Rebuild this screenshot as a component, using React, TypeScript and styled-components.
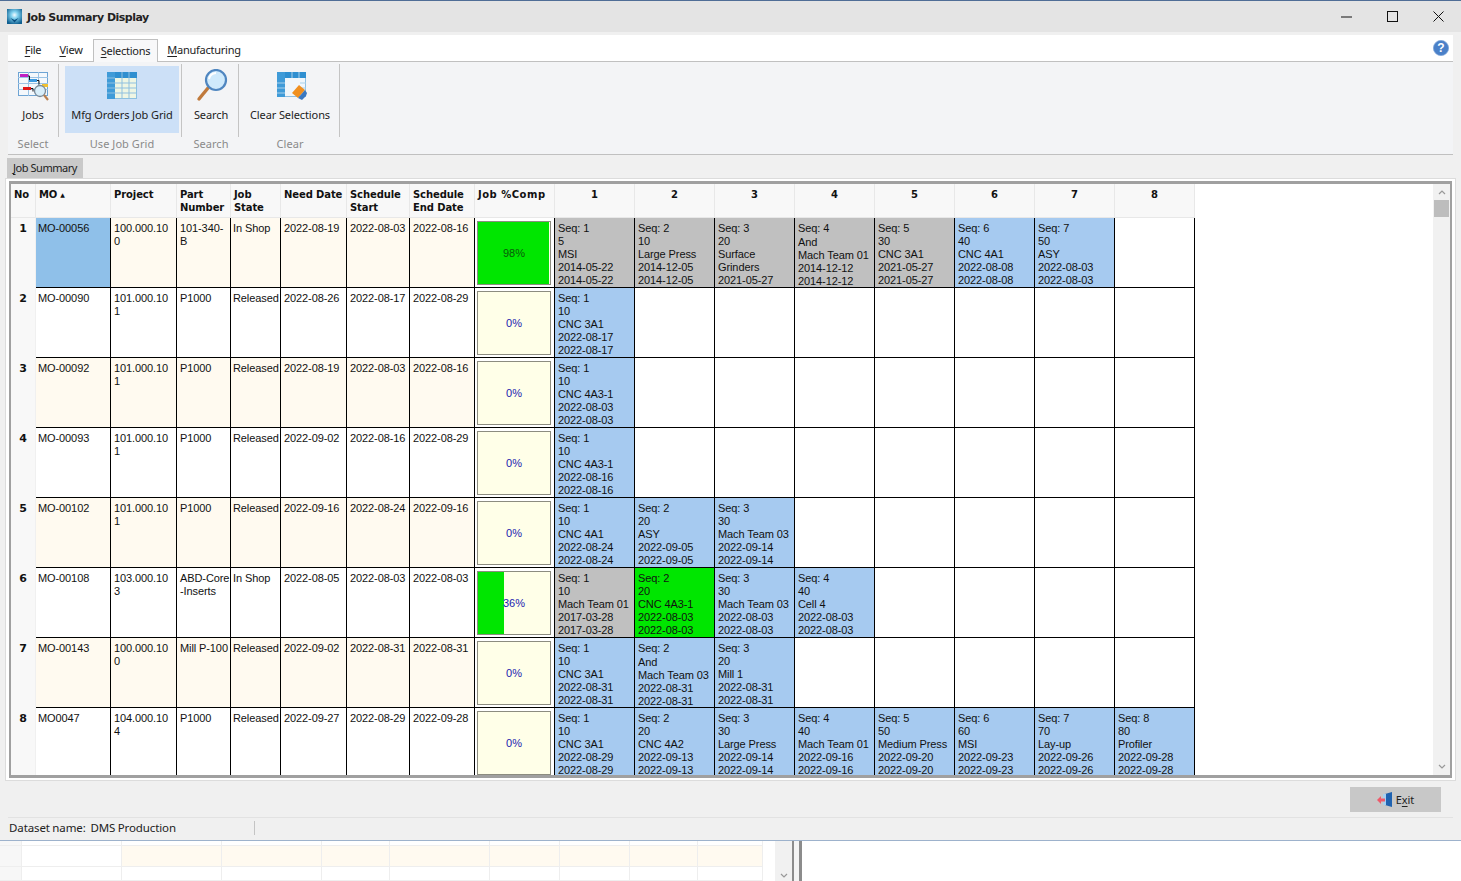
import React from "react";
import styled, { createGlobalStyle } from "styled-components";

const Global = createGlobalStyle`
  html, body { margin: 0; padding: 0; background: #fff; overflow: hidden; }
  #root { width: 1461px; height: 881px; overflow: hidden; }
`;

const Page = styled.div`
  width: 1461px; height: 881px; display: flex; flex-direction: column;
  font-family: "Liberation Sans", Arial, sans-serif; color: #111;
`;
const Win = styled.div`
  flex: none; background: #f0f0f0; display: flex; flex-direction: column;
  border-top: 1px solid #4f6d96; border-bottom: 1px solid #9db2cc; height: 839px;
`;
const TitleBar = styled.div`
  height: 31px; flex: none; background: #e4e4e4; display: flex; align-items: center; padding-left: 7px;
`;
const TitleText = styled.span`
  font: bold 11px "DejaVu Sans", sans-serif; letter-spacing: -0.5px; margin: 2px 0 0 5px; color: #222;
`;
const WinButtons = styled.div`
  margin-left: auto; display: flex; align-items: center; gap: 35px; padding-right: 17px; color: #111;
`;
const MenuBar = styled.div`
  margin: 3px 8px 0; height: 26px; flex: none; background: #fff; border-bottom: 1px solid #c0c0c0;
  display: flex; align-items: flex-end; padding-left: 1px; position: relative;
`;
const MenuItem = styled.div<{ $active?: boolean; $w: number; $mr?: number }>`
  width: ${p => p.$w}px; height: 22px; box-sizing: border-box; text-align: center; margin-right: ${p => p.$mr || 0}px;
  font: 11px/21px "Noto Sans", sans-serif; letter-spacing: -0.25px; color: #222;
  ${p => p.$active ? "border: 1px solid #c0c0c0; border-bottom: 0; background:#f8f8f9; margin-bottom:-1px; height:23px;" : ""}
  u { text-decoration-thickness: 1px; text-underline-offset: 2px; }
`;
const HelpBtn = styled.div`
  position: absolute; right: 4px; top: 5px; width: 16px; height: 16px;
`;
const Ribbon = styled.div`
  margin: 0 8px; flex: none; background: #f3f4f6; border-bottom: 1px solid #c0c0c0;
  display: flex; padding-top: 2px; box-sizing: border-box; height: 93px;
`;
const RibbonGroup = styled.div<{ $w: number; $pl: number }>`
  width: ${p => p.$w}px; height: 71px; padding: 2px 2px 0 ${p => p.$pl}px; border-right: 1px solid #c4c4c4; flex: none;
  display: flex; flex-direction: column;
`;
const RibbonBtn = styled.div<{ $on?: boolean }>`
  height: 67px; flex: none; display: flex; flex-direction: column; align-items: center;
  background: ${p => (p.$on ? "#cce0f7" : "transparent")}; font: 11px/15px "Noto Sans", sans-serif; letter-spacing: -0.1px; color: #222;
  svg { margin-top: 3px; height: 36px; flex: none; }
  span { margin-top: 2px; white-space: nowrap; }
`;
const GroupLabel = styled.div`
  margin-top: 3px; text-align: center; font: 11px/15px "Noto Sans", sans-serif; color: #8a8a8a; letter-spacing: 0.05px; white-space: nowrap;
`;
const TabRow = styled.div`
  height: 24px; flex: none; padding: 3px 7px 0; box-sizing: border-box; display: flex;
`;
const Tab = styled.div`
  width: 76px; height: 20px; background: #c9c9c9; font: 11px/20px "Noto Sans", sans-serif; letter-spacing: -0.45px; text-align: center; color: #222;
  u { text-underline-offset: 2px; }
`;
const GridOuter = styled.div`
  margin: -1px 5px 0; height: 603px; flex: none; box-sizing: border-box; border: 1px solid #dcdcdc;
  padding: 2px 3px; background: #fff;
`;
const GridFrame = styled.div`
  height: 100%; box-sizing: border-box; border-style: solid; border-color: #a0a0a0; border-width: 3px 2px; background: #fff;
  display: flex; position: relative; overflow: hidden;
`;
const Table = styled.div`
  display: grid; flex: none; align-content: start;
  grid-template-columns: 25px 75px 66px 54px 50px 66px 63px 65px 80px repeat(8, 80px);
  grid-template-rows: 34px repeat(8, 70px);
  height: 100%; overflow: hidden;
`;
const Head = styled.div<{ $center?: boolean; $wide?: boolean }>`
  background: #f8f8f8; border-right: 1px solid #e8e8e8; border-bottom: 1px solid #e8e8e8;
  font: bold 10px/13px "DejaVu Sans", sans-serif; letter-spacing: ${p => (p.$wide ? 0.5 : -0.1)}px; color: #111; box-sizing: border-box; white-space: pre-line;
  padding: 4px 0 0 ${p => (p.$center ? 0 : 3)}px;
  text-align: ${p => (p.$center ? "center" : "left")};
`;
const SortMark = styled.span`
  font-size: 6px; vertical-align: 1px; margin-left: 1px;
`;
const RowNo = styled(Head)`
  text-align: center; padding: 4px 0 0 0; font-size: 11px; border-bottom-color: #f8f8f8; border-right-color: #f0f0f0;
`;
const Cell = styled.div<{ $bg?: string }>`
  background: ${p => p.$bg || "#fff"}; border-right: 1px solid #000; border-bottom: 1px solid #000; box-sizing: border-box;
  font-size: 11px; line-height: 13px; letter-spacing: -0.1px; padding: 4px 0 0 3px; overflow: hidden; white-space: pre-line; color: #111;
`;
const MoCell = styled(Cell)` padding-left: 2px; `;
const StateCell = styled(Cell)` padding-left: 2px; `;
const CompCell = styled.div`
  border-right: 1px solid #000; border-bottom: 1px solid #000; background: #fff; padding: 3px 3px 2px 2px; box-sizing: border-box;
`;
const CompBox = styled.div<{ $full: boolean }>`
  height: 100%; box-sizing: border-box; border: 1px solid #8c8c80; background: #ffffe8; position: relative;
  display: flex; align-items: center; justify-content: center; font-size: 11px;
  color: ${p => (p.$full ? "#0a5a0a" : "#1a1ab0")};
`;
const CompFill = styled.div`
  position: absolute; left: 0; top: 0; bottom: 0; background: #00e600;
`;
const CompText = styled.span`
  position: relative;
`;
const Seq = styled(Cell)`
  padding: 4px 0 0 3px; white-space: nowrap;
`;
const SeqLine = styled.div<{ $and?: boolean }>`
  position: relative; top: ${p => (p.$and ? 1 : 0)}px; margin-bottom: ${p => (p.$and ? 0.5 : 0)}px;
`;
const ScrollTrack = styled.div`
  position: absolute; right: 0; top: 0; bottom: 0; width: 17px; background: #f1f1f1;
  display: flex; flex-direction: column; align-items: center; color: #999;
`;
const ScrollThumb = styled.div`
  width: 15px; height: 17px; background: #bdbdbd; margin-top: 5px; flex: none;
`;
const ScrollArrow = styled.svg<{ $end?: boolean }>`
  width: 8px; height: 5px; flex: none; margin-top: ${p => (p.$end ? "auto" : "6px")}; margin-bottom: ${p => (p.$end ? "6px" : "0")};
`;
const FooterRow = styled.div`
  height: 37px; flex: none; margin: 0 8px; border-bottom: 1px solid #e2e2e2; display: flex; justify-content: flex-end; padding: 6px 12px 0 0; box-sizing: border-box;
`;
const ExitBtn = styled.div`
  width: 91px; height: 25px; background: #c8c8c8; display: flex; align-items: center; justify-content: center; gap: 3px; font: 11px "Noto Sans", sans-serif; letter-spacing: -0.1px; color: #222;
  u { text-underline-offset: 2px; }
`;
const StatusBar = styled.div`
  flex: 1; display: flex; align-items: center; padding: 0 0 2px 9px; font: 11.5px "Noto Sans", sans-serif; letter-spacing: -0.1px; color: #222;
`;
const StatusCell = styled.div`
  width: 245px; height: 14px; border-right: 1px solid #c4c4c4; line-height: 14px; white-space: pre; word-spacing: -0.5px;
`;
const Bottom = styled.div`
  flex: 1; display: flex; background: #fff; min-height: 0; overflow: hidden;
`;
const SheetGrid = styled.div`
  width: 763px; flex: none; display: grid; grid-template-columns: 22px 100px 100px 100px 68px 100px 70px 70px 68px 65px; grid-template-rows: 5px 21px 14px;
`;
const Sheet = styled.div<{ $bg: string }>`
  border-right: 1px solid #eee; border-bottom: 1px solid #eee; box-sizing: border-box;
  background: ${p => p.$bg};
`;
const BotScroll = styled.div`
  width: 17px; margin-left: 12px; background: #f1f1f1; flex: none; display: flex; align-items: flex-end; justify-content: center; color: #999;
  svg { margin-bottom: 3px; }
`;
const Splitter = styled.div`
  width: 5px; flex: none; border-left: 2px solid #8c8c8c; border-right: 3px solid #8c8c8c; background: #f4f4f4;
`;

type S = { l: string[]; c: "g" | "b" | "n" };
const sq = (c: S["c"], ...l: string[]): S => ({ c, l });
const rows: { mo: string; prj: string; part: string; st: string; d: string[]; pct: number; seq: S[] }[] = [
  { mo: "MO-00056", prj: "100.000.10\n0", part: "101-340-\nB", st: "In Shop", d: ["2022-08-19","2022-08-03","2022-08-16"], pct: 98, seq: [
    sq("g","Seq: 1","5","MSI","2014-05-22","2014-05-22"), sq("g","Seq: 2","10","Large Press","2014-12-05","2014-12-05"),
    sq("g","Seq: 3","20","Surface","Grinders","2021-05-27"), sq("g","Seq: 4","And","Mach Team 01","2014-12-12","2014-12-12"),
    sq("g","Seq: 5","30","CNC 3A1","2021-05-27","2021-05-27"), sq("b","Seq: 6","40","CNC 4A1","2022-08-08","2022-08-08"),
    sq("b","Seq: 7","50","ASY","2022-08-03","2022-08-03") ] },
  { mo: "MO-00090", prj: "101.000.10\n1", part: "P1000", st: "Released", d: ["2022-08-26","2022-08-17","2022-08-29"], pct: 0, seq: [ sq("b","Seq: 1","10","CNC 3A1","2022-08-17","2022-08-17") ] },
  { mo: "MO-00092", prj: "101.000.10\n1", part: "P1000", st: "Released", d: ["2022-08-19","2022-08-03","2022-08-16"], pct: 0, seq: [ sq("b","Seq: 1","10","CNC 4A3-1","2022-08-03","2022-08-03") ] },
  { mo: "MO-00093", prj: "101.000.10\n1", part: "P1000", st: "Released", d: ["2022-09-02","2022-08-16","2022-08-29"], pct: 0, seq: [ sq("b","Seq: 1","10","CNC 4A3-1","2022-08-16","2022-08-16") ] },
  { mo: "MO-00102", prj: "101.000.10\n1", part: "P1000", st: "Released", d: ["2022-09-16","2022-08-24","2022-09-16"], pct: 0, seq: [
    sq("b","Seq: 1","10","CNC 4A1","2022-08-24","2022-08-24"), sq("b","Seq: 2","20","ASY","2022-09-05","2022-09-05"), sq("b","Seq: 3","30","Mach Team 03","2022-09-14","2022-09-14") ] },
  { mo: "MO-00108", prj: "103.000.10\n3", part: "ABD-Core\n-Inserts", st: "In Shop", d: ["2022-08-05","2022-08-03","2022-08-03"], pct: 36, seq: [
    sq("g","Seq: 1","10","Mach Team 01","2017-03-28","2017-03-28"), sq("n","Seq: 2","20","CNC 4A3-1","2022-08-03","2022-08-03"),
    sq("b","Seq: 3","30","Mach Team 03","2022-08-03","2022-08-03"), sq("b","Seq: 4","40","Cell 4","2022-08-03","2022-08-03") ] },
  { mo: "MO-00143", prj: "100.000.10\n0", part: "Mill P-100", st: "Released", d: ["2022-09-02","2022-08-31","2022-08-31"], pct: 0, seq: [
    sq("b","Seq: 1","10","CNC 3A1","2022-08-31","2022-08-31"), sq("b","Seq: 2","And","Mach Team 03","2022-08-31","2022-08-31"), sq("b","Seq: 3","20","Mill 1","2022-08-31","2022-08-31") ] },
  { mo: "MO0047", prj: "104.000.10\n4", part: "P1000", st: "Released", d: ["2022-09-27","2022-08-29","2022-09-28"], pct: 0, seq: [
    sq("b","Seq: 1","10","CNC 3A1","2022-08-29","2022-08-29"), sq("b","Seq: 2","20","CNC 4A2","2022-09-13","2022-09-13"),
    sq("b","Seq: 3","30","Large Press","2022-09-14","2022-09-14"), sq("b","Seq: 4","40","Mach Team 01","2022-09-16","2022-09-16"),
    sq("b","Seq: 5","50","Medium Press","2022-09-20","2022-09-20"), sq("b","Seq: 6","60","MSI","2022-09-23","2022-09-23"),
    sq("b","Seq: 7","70","Lay-up","2022-09-26","2022-09-26"), sq("b","Seq: 8","80","Profiler","2022-09-28","2022-09-28") ] },
];
const seqBg = { g: "#c0c0c0", b: "#a6caf0", n: "#00e600" };
const heads = ["Project", "Part\nNumber", "Job\nState", "Need Date", "Schedule\nStart", "Schedule\nEnd Date"];

const GridIcon = () => (
  <svg width="30" height="36" viewBox="0 0 30 36">
    <rect x="0.5" y="3.5" width="29" height="26" fill="#eef6e4" stroke="#8cc0e0" />
    <rect x="0" y="3" width="30" height="6" fill="#2f8fd0" />
    <rect x="0" y="3" width="8" height="27" fill="#3f9bd8" />
    <path d="M8 14h22M8 19h22M8 24h22M15 3v27M22 3v27M0 9h8M0 14h8M0 19h8M0 24h8" stroke="#8fc0e0" strokeWidth="1" />
  </svg>
);
const JobsIcon = () => (
  <svg width="32" height="36" viewBox="0 0 32 36">
    <rect x="1.5" y="3.5" width="29" height="23" fill="#f4f8fc" stroke="#6ea4d4" />
    <path d="M1 8.5h30M1 14.5h30M1 20.5h30M11.5 3v24M21.5 3v24" stroke="#9cc3e4" />
    <rect x="3" y="5" width="8" height="3" fill="#c020c0" />
    <rect x="12" y="10" width="8" height="3" fill="#3f9be0" />
    <rect x="25" y="15" width="6" height="3" fill="#f0c030" />
    <rect x="6" y="18" width="8" height="3" fill="#e01818" />
    <path d="M11 7h1.5v4M20 11.5h2v4M14 19.5h2v3" stroke="#111" fill="none" />
    <circle cx="23" cy="22" r="5.5" fill="#d8eefa" stroke="#7a8a98" strokeWidth="1.3" />
    <path d="M27 26l4 5" stroke="#b98050" strokeWidth="2.2" />
  </svg>
);
const SearchIcon = () => (
  <svg width="34" height="36" viewBox="0 0 34 36">
    <path d="M5 30L14 19" stroke="#c07a3c" strokeWidth="3.4" strokeLinecap="round" />
    <circle cx="22" cy="11" r="10" fill="#cfeafc" stroke="#4f86c0" strokeWidth="2.2" />
    <path d="M15 10a7.5 7.5 0 0 1 7-6" stroke="#fff" strokeWidth="2" fill="none" />
  </svg>
);
const ClearIcon = () => (
  <svg width="36" height="36" viewBox="0 0 36 36">
    <rect x="5.5" y="3.5" width="28" height="24" fill="#f0f6fa" stroke="#8ec0e4" />
    <rect x="5" y="3" width="29" height="6" fill="#2f8fd0" />
    <rect x="5" y="3" width="8" height="25" fill="#3f9bd8" />
    <path d="M5 14h8M5 19h8M5 24h8M20 3v6M27 3v6M28 14h6M28 19h6" stroke="#a8d0ea" />
    <path d="M20 24l7-8 6 5-7 8z" fill="#f09020" />
    <path d="M26 29l7-8 2 3-1 3-4 4z" fill="#3a78c0" />
  </svg>
);
const AppIcon = () => (
  <svg width="15" height="15" viewBox="0 0 15 15">
    <defs>
      <radialGradient id="ag" cx="50%" cy="40%" r="65%"><stop offset="0" stopColor="#f4fbff" /><stop offset="0.35" stopColor="#7fd0ee" /><stop offset="1" stopColor="#0f5f90" /></radialGradient>
    </defs>
    <rect width="15" height="15" fill="url(#ag)" />
    <path d="M7.5 13.5l-4-4.5 4 2 4-2z" fill="#0b4f80" />
  </svg>
);
const HelpIcon = () => (
  <svg width="16" height="16" viewBox="0 0 16 16">
    <circle cx="8" cy="8" r="7.6" fill="#4a80c8" stroke="#7ea4d8" strokeWidth="0.8" />
    <text x="8" y="12.3" textAnchor="middle" fontFamily="Liberation Sans" fontWeight="bold" fontSize="12" fill="#fff">?</text>
  </svg>
);
const ExitIcon = () => (
  <svg width="16" height="15" viewBox="0 0 16 15">
    <path d="M8 2l7-2v15l-7-2z" fill="#1f62b0" />
    <rect x="6" y="2" width="3" height="11" fill="#a8d0f0" />
    <path d="M0 8l4-4v2.5h4v3H4V12z" fill="#ee5a6a" />
  </svg>
);

export default function App() {
  return (
    <Page>
      <Global />
      <Win>
        <TitleBar>
          <AppIcon />
          <TitleText>Job Summary Display</TitleText>
          <WinButtons>
            <svg width="11" height="11" viewBox="0 0 11 11"><path d="M0 6h11" stroke="#111" /></svg>
            <svg width="11" height="11" viewBox="0 0 11 11"><rect x="0.5" y="0.5" width="10" height="10" fill="none" stroke="#111" /></svg>
            <svg width="11" height="11" viewBox="0 0 11 11"><path d="M0.5 0.5l10 10M10.5 0.5l-10 10" stroke="#111" /></svg>
          </WinButtons>
        </TitleBar>
        <MenuBar>
          <MenuItem $w={48}><u>F</u>ile</MenuItem>
          <MenuItem $w={28} $mr={8}><u>V</u>iew</MenuItem>
          <MenuItem $w={65} $active><u>S</u>elections</MenuItem>
          <MenuItem $w={92}><u>M</u>anufacturing</MenuItem>
          <HelpBtn><HelpIcon /></HelpBtn>
        </MenuBar>
        <Ribbon>
          <RibbonGroup $w={46} $pl={2}>
            <RibbonBtn><JobsIcon /><span>Jobs</span></RibbonBtn>
            <GroupLabel>Select</GroupLabel>
          </RibbonGroup>
          <RibbonGroup $w={114} $pl={6}>
            <RibbonBtn $on><GridIcon /><span>Mfg Orders Job Grid</span></RibbonBtn>
            <GroupLabel>Use Job Grid</GroupLabel>
          </RibbonGroup>
          <RibbonGroup $w={50} $pl={4}>
            <RibbonBtn><SearchIcon /><span>Search</span></RibbonBtn>
            <GroupLabel>Search</GroupLabel>
          </RibbonGroup>
          <RibbonGroup $w={94} $pl={4}>
            <RibbonBtn><ClearIcon /><span>Clear Selections</span></RibbonBtn>
            <GroupLabel>Clear</GroupLabel>
          </RibbonGroup>
        </Ribbon>
        <TabRow><Tab><u>J</u>ob Summary</Tab></TabRow>
        <GridOuter>
          <GridFrame>
            <Table>
              <Head>No</Head>
              <Head>MO<SortMark> ▲</SortMark></Head>
              {heads.map(h => <Head key={h}>{h}</Head>)}
              <Head $wide>Job %Comp</Head>
              {[1,2,3,4,5,6,7,8].map(n => <Head key={n} $center>{n}</Head>)}
              {rows.map((r, i) => {
                const cream = i % 2 === 0 ? "#fffaf0" : "#fff";
                return (
                  <React.Fragment key={r.mo}>
                    <RowNo>{i + 1}</RowNo>
                    <MoCell $bg={i === 0 ? "#8fc0e9" : cream}>{r.mo}</MoCell>
                    <Cell $bg={cream}>{r.prj}</Cell>
                    <Cell $bg={cream}>{r.part}</Cell>
                    <StateCell $bg={cream}>{r.st}</StateCell>
                    {r.d.map((d, k) => <Cell key={k} $bg={cream}>{d}</Cell>)}
                    <CompCell>
                      <CompBox $full={r.pct > 50}>
                        <CompFill style={{ width: `${r.pct}%` }} />
                        <CompText>{r.pct}%</CompText>
                      </CompBox>
                    </CompCell>
                    {Array.from({ length: 8 }).map((_, k) => {
                      const s = r.seq[k];
                      return (
                        <Seq key={k} $bg={s ? seqBg[s.c] : "#fff"}>
                          {s && s.l.map((t, m) => <SeqLine key={m} $and={t === "And"}>{t}</SeqLine>)}
                        </Seq>
                      );
                    })}
                  </React.Fragment>
                );
              })}
            </Table>
            <ScrollTrack>
              <ScrollArrow viewBox="0 0 8 5"><path d="M1 4l3-3 3 3" fill="none" stroke="#999" strokeWidth="1.2" /></ScrollArrow>
              <ScrollThumb />
              <ScrollArrow $end viewBox="0 0 8 5"><path d="M1 1l3 3 3-3" fill="none" stroke="#999" strokeWidth="1.2" /></ScrollArrow>
            </ScrollTrack>
          </GridFrame>
        </GridOuter>
        <FooterRow>
          <ExitBtn><ExitIcon /><span>E<u>x</u>it</span></ExitBtn>
        </FooterRow>
        <StatusBar><StatusCell>Dataset name:  DMS Production</StatusCell></StatusBar>
      </Win>
      <Bottom>
        <SheetGrid>
          {Array.from({ length: 30 }).map((_, i) => (
            <Sheet key={i} $bg={i % 10 === 0 ? "#f7f7f7" : i >= 12 && i <= 19 ? "#fffaf0" : "#fff"} />
          ))}
        </SheetGrid>
        <BotScroll>
          <svg width="8" height="5" viewBox="0 0 8 5"><path d="M1 1l3 3 3-3" fill="none" stroke="#999" strokeWidth="1.2" /></svg>
        </BotScroll>
        <Splitter />
      </Bottom>
    </Page>
  );
}
